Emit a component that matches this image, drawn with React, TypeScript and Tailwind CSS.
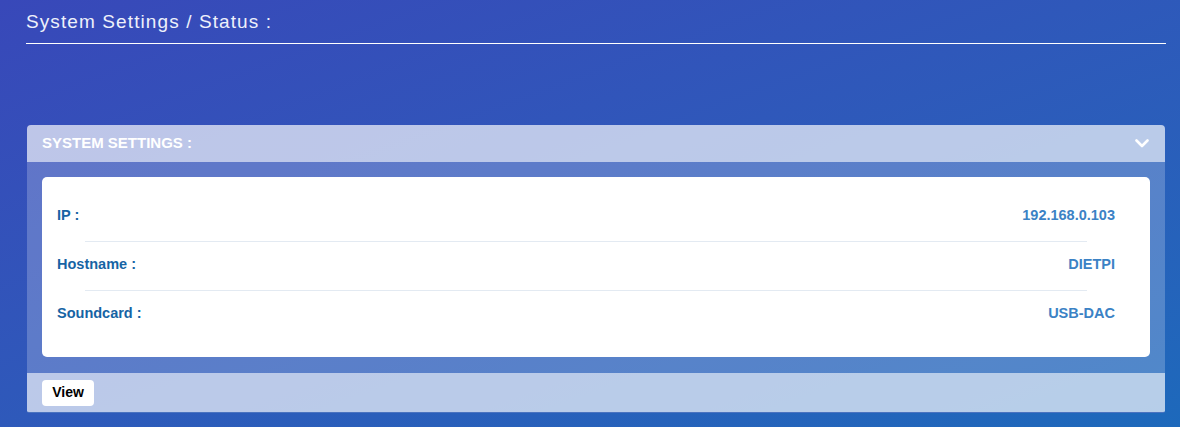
import React from 'react';

const rows = [
  { label: 'IP :', value: '192.168.0.103' },
  { label: 'Hostname :', value: 'DIETPI' },
  { label: 'Soundcard :', value: 'USB-DAC' },
];

const App: React.FC = () => {
  return (
    <div className="min-h-[427px] w-full bg-linear-to-br from-[#3848b9] to-[#1d69bb] pl-[26px] pr-[14px] pt-[10px] pb-[14px] font-['Liberation_Sans',Arial,sans-serif]">
      {/* page title */}
      <div className="border-b border-white pb-[9px]">
        <h1 className="text-[19px] leading-[24px] tracking-[1.1px] text-[#eef1fb]">System Settings / Status :</h1>
      </div>

      <div className="mt-[81px] ml-[1px] mr-[1px] overflow-hidden rounded-t-[4px] rounded-b-[2px] border-b border-[#4a73c0]">
        {/* header */}
        <div className="flex h-[37px] items-center justify-between bg-white/68 px-[15px]">
          <span className="text-[15px] font-bold text-white">SYSTEM SETTINGS :</span>
          <svg width="14" height="9" viewBox="0 0 14 9" className="mr-[1px]">
            <path d="M1.5 1.5 L7 7 L12.5 1.5" fill="none" stroke="white" strokeWidth="2.6" strokeLinecap="round" strokeLinejoin="round" />
          </svg>
        </div>

        {/* body */}
        <div className="bg-white/22 p-[15px] pb-[16px]">
          <div className="rounded-[5px] bg-white pt-[16px] pb-[18px]">
            {rows.map((r, i) => (
              <div key={r.label}>
                {i > 0 && <div className="ml-[43px] mr-[63px] h-px bg-[#e3eaf2]" />}
                <div className="flex items-center justify-between pl-[15px] pr-[35px] pt-[12px] pb-[16px] text-[14.5px] leading-[20px] font-bold">
                  <span className="text-[#1664a4]">{r.label}</span>
                  <span className="text-[#3b82c5]">{r.value}</span>
                </div>
              </div>
            ))}
          </div>
        </div>

        {/* footer */}
        <div className="flex h-[39px] items-center bg-white/68 px-[15px]">
          <button className="h-[26px] w-[52px] rounded-[4px] bg-white text-[14px] font-bold text-black">View</button>
        </div>
      </div>
    </div>
  );
};

export default App;
